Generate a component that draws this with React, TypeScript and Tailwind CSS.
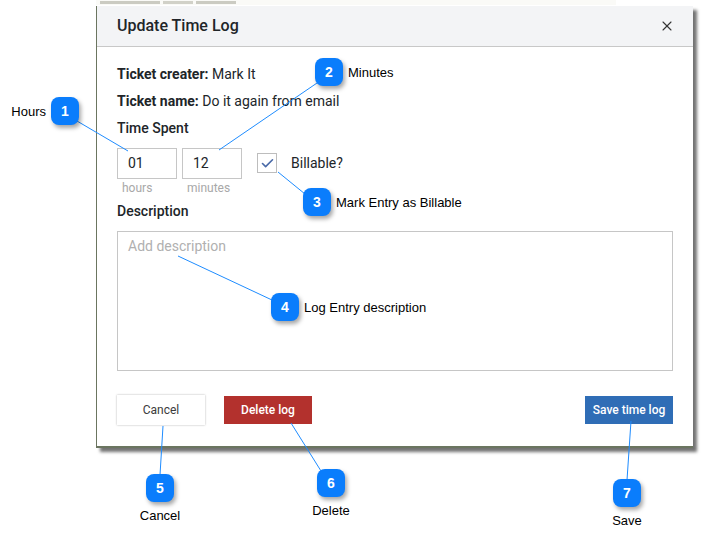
import React from 'react';
import { X, Check } from 'lucide-react';

// Numbered callout badge with its caption
const Callout = ({ n, x, y, label, side = 'right' }: { n: number; x: number; y: number; label: string; side?: 'right' | 'left' | 'below' }) => (
  <>
    <div
      className="absolute w-[28px] h-[28px] rounded-[8px] bg-[#0a7dfc] text-white flex items-center justify-center text-[14px] font-bold shadow-[2px_3px_4px_rgba(0,0,0,0.35)]"
      style={{ left: x - 14, top: y - 14, fontFamily: '"Liberation Sans", Arial, sans-serif' }}
    >
      {n}
    </div>
    {side === 'right' && (
      <span className="absolute text-[13px] text-black leading-none" style={{ left: x + 19, top: y - 6 }}>{label}</span>
    )}
    {side === 'left' && (
      <span className="absolute text-[13px] text-black leading-none" style={{ right: 703 - (x - 19), top: y - 6 }}>{label}</span>
    )}
    {side === 'below' && (
      <span className="absolute text-[13px] text-black leading-none -translate-x-1/2" style={{ left: x, top: y + 21 }}>{label}</span>
    )}
  </>
);

const lines: [number, number, number, number][] = [
  [77, 121, 128, 151],
  [317, 83, 219, 150],
  [278, 172, 305, 194],
  [178, 256, 272, 300],
  [163, 426, 160, 475],
  [291, 423, 321, 471],
  [631, 421, 627, 480],
];

export default function App() {
  return (
    <div className="relative w-[703px] h-[544px] bg-white overflow-hidden" style={{ fontFamily: 'Roboto, "Liberation Sans", sans-serif' }}>
      {/* Background window peeking out above the dialog */}
      <div className="absolute left-[100px] top-[1px] flex gap-[3px]">
        <div className="w-[60px] h-[3px] bg-[#8a8a7a]" />
        <div className="w-[30px] h-[3px] bg-[#9a9a8a]" />
        <div className="w-[40px] h-[3px] bg-[#8a8a7a]" />
      </div>
      <div className="absolute left-[96px] top-0 w-[520px] h-[6px] border-t-[5px] border-[#f7f7f2] opacity-60" />

      {/* Dialog */}
      <div className="ml-[96px] mt-[6px] w-[597px] bg-white border-l border-b-[2px] border-[#6b7560] shadow-[4px_4px_3px_rgba(0,0,0,0.55)] flex flex-col">
        <div className="h-[41px] bg-[#f3f4f6] border-b border-[#c8c8c8] flex items-center justify-between pl-[20px] pr-[18px]">
          <span className="text-[16px] font-medium text-[#212529]">Update Time Log</span>
          <X size={16} strokeWidth={1.6} className="text-[#333]" />
        </div>

        <div className="pl-[20px] pr-[20px] pt-[14px] pb-[21px] text-[14px] text-[#212529]">
          <div className="leading-[27px]"><span className="font-bold">Ticket creater:</span> Mark It</div>
          <div className="leading-[27px]"><span className="font-bold">Ticket name:</span> Do it again from email</div>
          <div className="leading-[27px] font-medium">Time Spent</div>

          <div className="flex items-start mt-[6px]">
            <div className="flex flex-col w-[60px]">
              <div className="w-[60px] h-[31px] border border-[#c6c6c6] flex items-center pl-[10px]">01</div>
              <span className="text-[12px] text-[#a8a8a8] leading-[16px] mt-[1px] pl-[5px]">hours</span>
            </div>
            <div className="flex flex-col w-[60px] ml-[5px]">
              <div className="w-[60px] h-[31px] border border-[#c6c6c6] flex items-center pl-[10px]">12</div>
              <span className="text-[12px] text-[#a8a8a8] leading-[16px] mt-[1px] pl-[5px]">minutes</span>
            </div>
            <div className="ml-[15px] mt-[5px] w-[20px] h-[20px] border border-[#bdbdbd] flex items-center justify-center">
              <Check size={15} strokeWidth={2.6} className="text-[#4a6aa8]" />
            </div>
            <span className="ml-[14px] mt-[5px] leading-[20px]">Billable?</span>
          </div>

          <div className="leading-[27px] font-medium mt-[2px]">Description</div>
          <div className="mt-[6px] h-[140px] border border-[#c6c6c6] px-[10px] pt-[5px] text-[#b0b0b0] leading-[18px]">
            Add description
          </div>

          <div className="flex items-center mt-[24px] text-[12px]">
            <button className="w-[88px] h-[30px] bg-white text-[#3b3b3b] shadow-[0_0_2px_rgba(0,0,0,0.3)]">Cancel</button>
            <button className="ml-[19px] w-[88px] h-[28px] bg-[#b3312d] text-white font-medium">Delete log</button>
            <button className="ml-auto w-[88px] h-[28px] bg-[#2f6db6] text-white font-medium">Save time log</button>
          </div>
        </div>
      </div>

      {/* Connector lines */}
      <svg className="absolute left-0 top-0" width={703} height={544}>
        {lines.map(([x1, y1, x2, y2], i) => (
          <line key={i} x1={x1} y1={y1} x2={x2} y2={y2} stroke="#1e8cff" strokeWidth={1} />
        ))}
      </svg>

      <div style={{ fontFamily: '"Liberation Sans", Arial, sans-serif' }}>
        <Callout n={1} x={65} y={111} label="Hours" side="left" />
        <Callout n={2} x={329} y={72} label="Minutes" />
        <Callout n={3} x={317} y={202} label="Mark Entry as Billable" />
        <Callout n={4} x={285} y={307} label="Log Entry description" />
        <Callout n={5} x={160} y={488} label="Cancel" side="below" />
        <Callout n={6} x={331} y={483} label="Delete" side="below" />
        <Callout n={7} x={627} y={493} label="Save" side="below" />
      </div>
    </div>
  );
}
